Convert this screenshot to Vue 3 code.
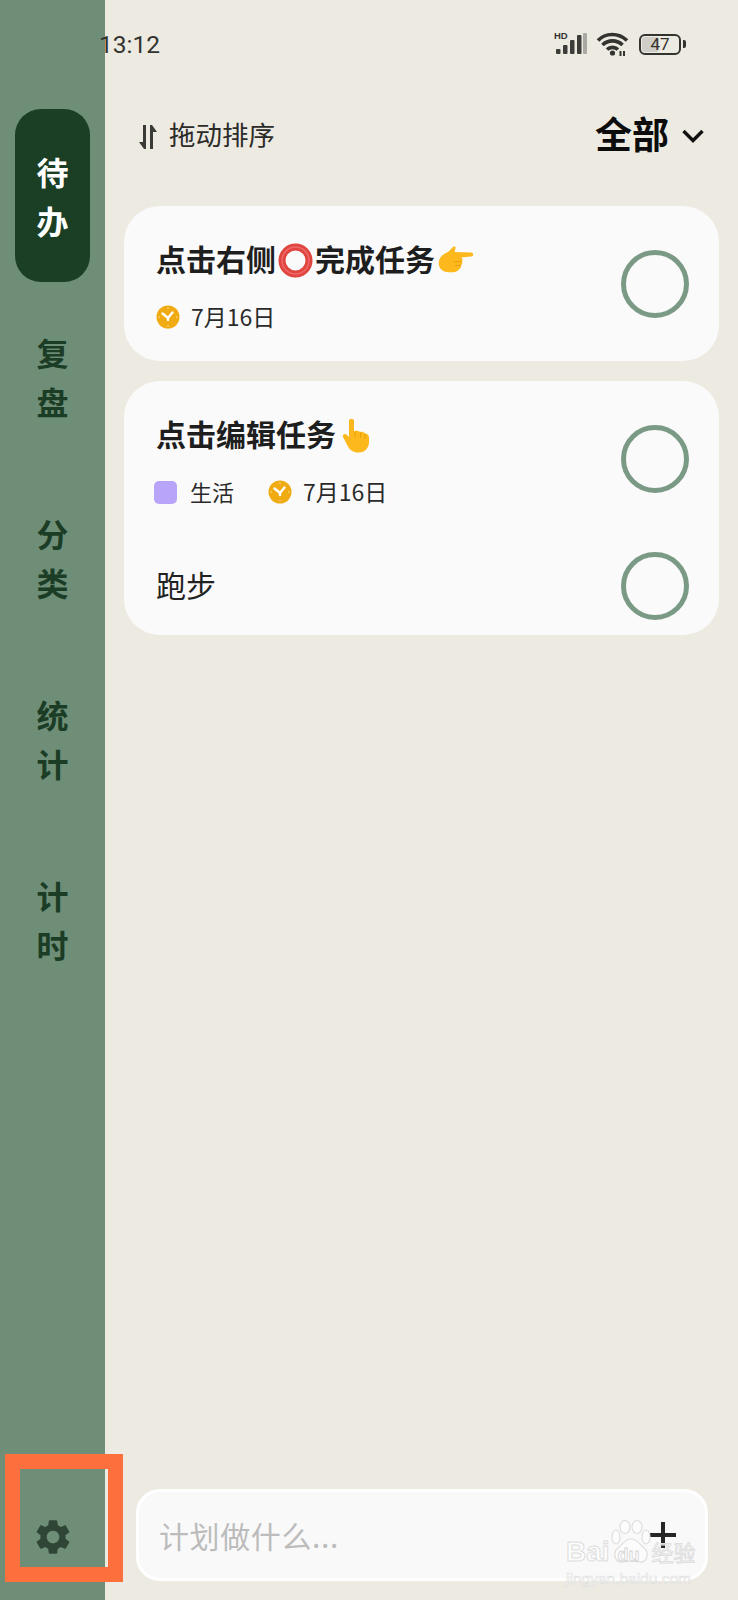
<script setup>
const navItems = [
  { chars: ['待', '办'], active: true },
  { chars: ['复', '盘'] },
  { chars: ['分', '类'] },
  { chars: ['统', '计'] },
  { chars: ['计', '时'] },
]
const signalBars = [
  { x: 2, y: 16, h: 5 },
  { x: 9, y: 12, h: 9 },
  { x: 16, y: 7, h: 14 },
  { x: 23, y: 2, h: 19 },
]
</script>

<template>
  <div class="phone">
    <aside class="sidebar">
      <nav class="nav">
        <div
          v-for="item in navItems"
          :key="item.chars.join('')"
          class="nav-item"
          :class="{ active: item.active }"
        >
          <span v-for="c in item.chars" :key="c">{{ c }}</span>
        </div>
      </nav>
      <div class="settings">
        <svg width="42" height="42" viewBox="0 0 24 24" fill="#2f4636">
          <path d="M19.14 12.94c.04-.3.06-.61.06-.94 0-.32-.02-.64-.07-.94l2.03-1.58c.18-.14.23-.41.12-.61l-1.92-3.32c-.12-.22-.37-.29-.59-.22l-2.39.96c-.5-.38-1.03-.7-1.62-.94l-.36-2.54c-.04-.24-.24-.41-.48-.41h-3.84c-.24 0-.43.17-.47.41l-.36 2.54c-.59.24-1.13.57-1.62.94l-2.39-.96c-.22-.08-.47 0-.59.22L2.74 8.87c-.12.21-.08.47.12.61l2.03 1.58c-.05.3-.09.63-.09.94s.02.64.07.94l-2.03 1.58c-.18.14-.23.41-.12.61l1.92 3.32c.12.22.37.29.59.22l2.39-.96c.5.38 1.03.7 1.62.94l.36 2.54c.05.24.24.41.48.41h3.84c.24 0 .44-.17.47-.41l.36-2.54c.59-.24 1.13-.56 1.62-.94l2.39.96c.22.08.47 0 .59-.22l1.92-3.32c.12-.22.07-.47-.12-.61l-2.01-1.58zM12 15.6c-1.98 0-3.6-1.62-3.6-3.6s1.62-3.6 3.6-3.6 3.6 1.62 3.6 3.6-1.62 3.6-3.6 3.6z" />
        </svg>
      </div>
    </aside>

    <main class="content">
      <header class="toolbar">
        <div class="sort">
          <svg width="20" height="26" viewBox="0 0 20 26" fill="#3a3a36">
            <path d="M5 1h3v24H6L1 18h4z" />
            <path d="M12 1h2l5 7h-4v17h-3z" />
          </svg>
          <span>拖动排序</span>
        </div>
        <div class="filter">
          <span>全部</span>
          <svg width="22" height="14" viewBox="0 0 22 14" fill="none" stroke="#111" stroke-width="3.4">
            <path d="M1.5 2l9.5 9.5L20.5 2" />
          </svg>
        </div>
      </header>

      <section class="card">
        <div class="task">
          <div class="task-body">
            <div class="title">
              <span>点击右侧</span>
              <svg class="ring" width="35" height="35" viewBox="0 0 35 35" fill="none">
                <circle cx="17.5" cy="17.5" r="13.5" stroke="#e0453f" stroke-width="7" />
                <circle cx="17.5" cy="17.5" r="13.5" stroke="#f0686a" stroke-width="1.500" />
              </svg>
              <span>完成任务</span>
              <svg class="hand" width="36" height="28" viewBox="0 0 36 28">
                <path fill="#fcb81d" d="M1 15C2 10 6 8 10 6l5-5c1-1 3-.5 2.500 1.500L16.500 6 33 6.500c3 .2 3 3.800 0 4L23 11.500c2 1 2 3 .8 4 1 1.500.5 3-.8 3.800 .5 1.700-.5 3-1.500 3.400C20 26 14 27 9 26 3 25 0 21 1 15z" />
                <path fill="#e99e0c" d="M23.500 15.500l-7 .5M23 19.300l-6 .5" stroke="#e99e0c" stroke-width="1" />
              </svg>
            </div>
            <div class="meta">
              <span class="meta-item">
                <svg class="clock" width="24" height="24" viewBox="0 0 24 24">
                  <circle cx="12" cy="12" r="11.500" fill="#f0ab12" />
                  <path d="M6.500 8.500L12 13l4.500-5.500M12 13v2" fill="none" stroke="#fff" stroke-width="2.400" stroke-linecap="round" stroke-linejoin="round" />
                  <path d="M12 2.500v1.500M12 20v1.500M2.500 12H4M20 12h1.500" stroke="#fbe2ab" stroke-width="1" />
                </svg>
                <span class="meta-text">7月16日</span>
              </span>
            </div>
          </div>
          <div class="check"></div>
        </div>
      </section>

      <section class="card">
        <div class="task">
          <div class="task-body">
            <div class="title">
              <span>点击编辑任务</span>
              <svg class="point-up" width="28" height="35" viewBox="0 0 28 35">
                <path fill="#fcb81d" d="M7 3c0-3 5-3 5 0v10c3-.5 5 0 6 1 2-.5 4 0 5 1.500 2 0 4 1.500 4 4v5c0 5-4 10-10 10-5 0-9-2-11-6L1 19c-1-2 1.500-4 3.500-2.500L7 19z" />
                <path d="M13 19v-5M18.500 20v-5.500M23 21v-5" stroke="#e99e0c" stroke-width="1" fill="none" />
              </svg>
            </div>
            <div class="meta">
              <span class="meta-item tag">
                <i class="swatch"></i>
                <span class="meta-text">生活</span>
              </span>
              <span class="meta-item">
                <svg class="clock" width="24" height="24" viewBox="0 0 24 24">
                  <circle cx="12" cy="12" r="11.500" fill="#f0ab12" />
                  <path d="M6.500 8.500L12 13l4.500-5.500M12 13v2" fill="none" stroke="#fff" stroke-width="2.400" stroke-linecap="round" stroke-linejoin="round" />
                  <path d="M12 2.500v1.500M12 20v1.500M2.500 12H4M20 12h1.500" stroke="#fbe2ab" stroke-width="1" />
                </svg>
                <span class="meta-text">7月16日</span>
              </span>
            </div>
          </div>
          <div class="check"></div>
        </div>
        <div class="task plain">
          <div class="task-name">跑步</div>
          <div class="check"></div>
        </div>
      </section>

      <div class="composer">
        <span class="placeholder">计划做什么...</span>
        <span class="plus"></span>
      </div>
    </main>

    <div class="statusbar">
      <span class="time">13:12</span>
      <div class="status-icons">
        <div class="signal">
          <b>HD</b>
          <svg width="34" height="22" viewBox="0 0 34 22" fill="#3c3c38">
            <rect v-for="b in signalBars" :key="b.x" :x="b.x" :y="b.y" width="4.500" :height="b.h" rx="1" />
            <rect x="29" y="0" width="4" height="21" rx="1" fill="#a9a8a2" />
          </svg>
        </div>
        <svg class="wifi" width="34" height="24" viewBox="0 0 34 24" fill="none" stroke="#33332f" stroke-width="3.600">
          <path d="M2 8.500C9.500 .5 22.500 .5 31 8.500" />
          <path d="M6.500 13C12 7.500 21 7.500 26.500 13" />
          <path d="M11 17.500c3-2.800 8-2.800 11 0" />
          <circle cx="16.500" cy="21" r="2.600" fill="#33332f" stroke="none" />
          <path d="M24.500 24v-5M28 24v-5" stroke-width="2" />
        </svg>
        <div class="battery">
          <div class="battery-body">
            <i class="battery-fill"></i>
            <span>47</span>
          </div>
          <i class="battery-nub"></i>
        </div>
      </div>
    </div>

    <div class="annotation"></div>

    <div class="watermark">
      <svg class="paw" width="40" height="44" viewBox="0 0 40 44" fill="rgba(255,255,255,.5)" stroke="#dedede" stroke-width="1.200">
        <ellipse cx="5" cy="17" rx="4" ry="7" />
        <ellipse cx="14" cy="7" rx="5" ry="6.500" />
        <ellipse cx="26" cy="7" rx="5" ry="6.500" />
        <ellipse cx="35" cy="17" rx="4" ry="7" />
        <path d="M20 19c6 0 8 5 13 9 6 5 3 15-5 14-5-1-11-1-16 0-8 1-11-9-5-14 5-4 7-9 13-9z" />
      </svg>
      <div class="wm-logo"><span>Bai</span><span class="wm-du">du</span><span class="wm-cn">经验</span></div>
      <div class="wm-url">jingyan.baidu.com</div>
    </div>
  </div>
</template>

<style>
body {
  background: #edeae2;
}
</style>

<style scoped>
.phone {
  position: relative;
  display: flex;
  width: 738px;
  height: 1600px;
  overflow: hidden;
  background: #edeae2;
  color: #222;
  font-family: "Noto Sans CJK SC", "Noto Sans", sans-serif;
}

.sidebar {
  display: flex;
  flex-direction: column;
  flex: none;
  width: 105px;
  padding-top: 109px;
  box-sizing: border-box;
  background: #6f8e78;
}

.nav {
  display: flex;
  flex-direction: column;
  gap: 8px;
  padding: 0 15px;
}

.nav-item {
  display: flex;
  flex-direction: column;
  align-items: center;
  justify-content: center;
  height: 173px;
  border-radius: 26px;
  color: #1b3d25;
  font-size: 32px;
  font-weight: 700;
  line-height: 49px;
}

.nav-item.active {
  background: #1a3f25;
  color: #fff;
}

.settings {
  display: flex;
  justify-content: center;
  margin-top: auto;
  padding-bottom: 42px;
}

.content {
  display: flex;
  flex-direction: column;
  flex: 1;
  gap: 20px;
  padding: 0 19px 19px;
}

.toolbar {
  display: flex;
  align-items: center;
  justify-content: space-between;
  height: 46px;
  margin: 110px 0 30px;
  padding: 0 15px 0 14px;
}

.sort {
  display: flex;
  align-items: center;
  gap: 11px;
  color: #2b2b28;
  font-size: 26.500px;
}

.sort svg {
  margin-top: 7px;
}

.filter {
  display: flex;
  align-items: center;
  gap: 13px;
  color: #0c0c0c;
  font-size: 37px;
  font-weight: 700;
}

.filter svg {
  margin-top: 6px;
}

.card {
  border-radius: 36px;
  background: #fafafa;
}

.task {
  display: flex;
  align-items: center;
  justify-content: space-between;
  height: 155px;
  padding: 0 30px 0 32px;
}

.task.plain {
  height: 99px;
}

.task-body {
  display: flex;
  flex-direction: column;
  gap: 21px;
  padding-top: 6px;
}

.title {
  display: flex;
  align-items: center;
  height: 40px;
  color: #1e1e1e;
  font-size: 30px;
  font-weight: 700;
}

.title span {
  padding-bottom: 4px;
}

.ring {
  margin: 0 2px 0 2px;
}

.hand {
  margin-left: 3px;
}

.point-up {
  margin: 0 0 0 6px;
}

.meta {
  display: flex;
  align-items: center;
  height: 32px;
  color: #2a2a2a;
  font-size: 23px;
}

.meta-item {
  display: flex;
  align-items: center;
}

.meta-text {
  padding-bottom: 2px;
}

.clock {
  margin-right: 11px;
}

.tag {
  margin-left: -2px;
  margin-right: 34px;
  font-size: 22px;
}

.swatch {
  width: 23px;
  height: 23px;
  margin-right: 13px;
  border-radius: 5px;
  background: #b8a4f9;
}

.task-name {
  padding-bottom: 4px;
  color: #222;
  font-size: 30px;
}

.check {
  flex: none;
  box-sizing: border-box;
  width: 68px;
  height: 68px;
  border: 5px solid #7b9a86;
  border-radius: 50%;
}

.composer {
  display: flex;
  align-items: center;
  justify-content: space-between;
  box-sizing: border-box;
  height: 92px;
  margin: auto 11px 0 12px;
  padding: 0 29px 0 20px;
  border: 3px solid #fff;
  border-radius: 24px;
  background: #f9f9fa;
}

.placeholder {
  color: #bcbcbc;
  font-size: 30px;
  letter-spacing: .6px;
}

.plus {
  width: 26px;
  height: 26px;
  background:
    linear-gradient(#262626, #262626) center / 100% 4px no-repeat,
    linear-gradient(#262626, #262626) center / 4px 100% no-repeat;
}

.statusbar {
  position: absolute;
  top: 24px;
  left: 99px;
  right: 52px;
  display: flex;
  align-items: center;
  justify-content: space-between;
  height: 40px;
}

.time {
  color: #33332f;
  font-family: Roboto, sans-serif;
  font-size: 24.500px;
}

.status-icons {
  display: flex;
  align-items: center;
}

.signal {
  position: relative;
  width: 34px;
  height: 22px;
  margin-right: 8px;
}

.signal svg {
  display: block;
}

.signal b {
  position: absolute;
  top: -2px;
  left: 0;
  color: #33332f;
  font-family: "Liberation Sans", sans-serif;
  font-size: 9.500px;
  line-height: 10px;
}

.battery {
  display: flex;
  align-items: center;
  gap: 2px;
  margin-left: 9px;
}

.battery-body {
  position: relative;
  box-sizing: border-box;
  width: 42px;
  height: 21px;
  border: 2px solid #33332f;
  border-radius: 6px;
  color: #33332f;
  font-family: Roboto, sans-serif;
  font-size: 17px;
  line-height: 17px;
  text-align: center;
}

.battery-fill {
  position: absolute;
  top: 1px;
  bottom: 1px;
  left: 1px;
  width: 46%;
  border-radius: 3px;
  background: #cfcdc6;
}

.battery-body span {
  position: relative;
}

.battery-nub {
  width: 3px;
  height: 8px;
  border-radius: 0 2px 2px 0;
  background: #33332f;
}

.annotation {
  position: absolute;
  top: 1454px;
  left: 5px;
  box-sizing: border-box;
  width: 118px;
  height: 128px;
  border: 15px solid #fd6f3c;
}

.watermark {
  position: absolute;
  top: 1520px;
  left: 566px;
  width: 136px;
  color: rgba(255, 255, 255, .6);
  pointer-events: none;
}

.paw {
  position: absolute;
  top: 0;
  left: 45px;
}

.wm-logo {
  position: relative;
  display: flex;
  align-items: baseline;
  margin-top: 15px;
  font-family: "Liberation Sans", sans-serif;
  font-size: 28px;
  font-weight: 700;
  line-height: 34px;
  -webkit-text-stroke: 1px #dedede;
}

.wm-du {
  margin-left: 8px;
  font-size: 18px;
  -webkit-text-stroke: .8px #d4d4d4;
}

.wm-cn {
  margin-left: 12px;
  font-family: "Noto Sans CJK SC", sans-serif;
  font-size: 22px;
  font-weight: 400;
  line-height: 26px;
}

.wm-url {
  position: relative;
  margin-top: -1px;
  font-family: "Liberation Sans", sans-serif;
  font-size: 15.500px;
  line-height: 16px;
  white-space: nowrap;
  -webkit-text-stroke: .6px #dedede;
}
</style>
